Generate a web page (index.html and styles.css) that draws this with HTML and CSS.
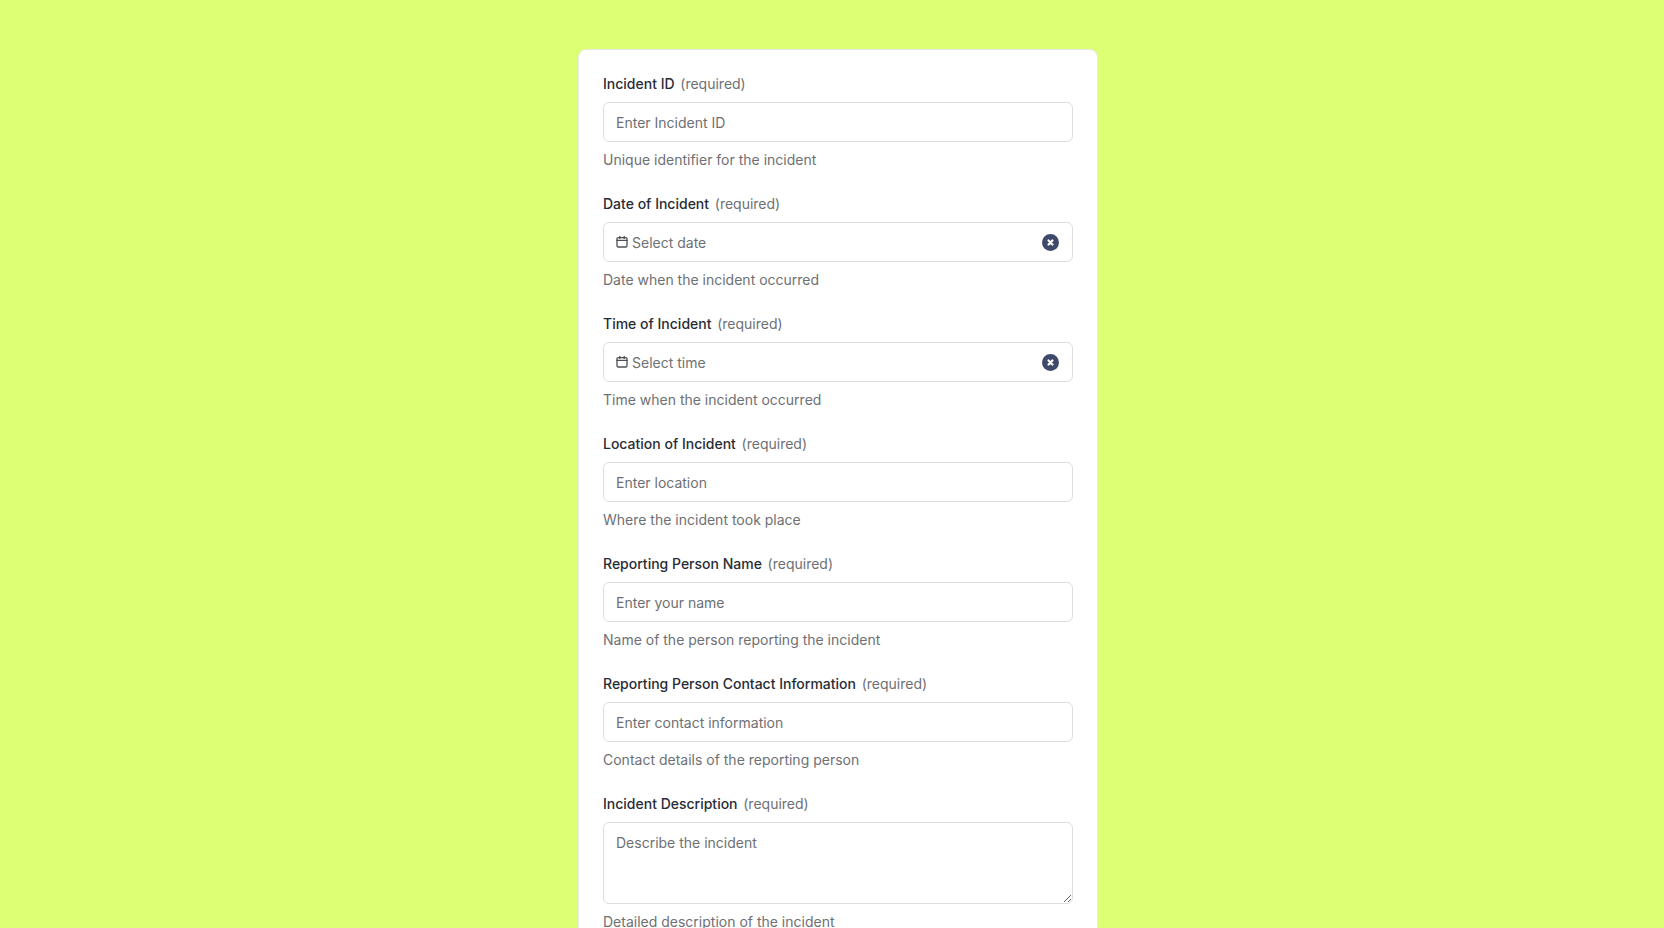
FILE: index.html
```html
<!DOCTYPE html>
<html lang="en">
<head>
  <meta charset="UTF-8">
  <meta name="viewport" content="width=device-width, initial-scale=1.0">
  <title>Incident Report</title>
  <link rel="stylesheet" href="styles.css">
</head>
<body>
  <form class="card">
    <div class="field">
      <label class="label">Incident ID <span class="req">(required)</span></label>
      <input class="input" type="text" placeholder="Enter Incident ID">
      <p class="hint">Unique identifier for the incident</p>
    </div>
    <div class="field">
      <label class="label">Date of Incident <span class="req">(required)</span></label>
      <div class="input picker">
        <svg class="cal" viewBox="0 0 14 14" fill="none" stroke="currentColor" stroke-width="1.3" stroke-linecap="round">
          <rect x="2" y="2.6" width="10" height="9.4" rx="1.2"/>
          <path d="M2 5.4h10M4.8 1.4v2M9.2 1.4v2"/>
        </svg>
        <span class="value">Select date</span>
        <button class="clear" type="button">
          <svg viewBox="0 0 10 10" fill="none" stroke="currentColor" stroke-width="2" stroke-linecap="round"><path d="M3.2 3.2l3.6 3.6M6.8 3.2l-3.6 3.6"/></svg>
        </button>
      </div>
      <p class="hint">Date when the incident occurred</p>
    </div>
    <div class="field">
      <label class="label">Time of Incident <span class="req">(required)</span></label>
      <div class="input picker">
        <svg class="cal" viewBox="0 0 14 14" fill="none" stroke="currentColor" stroke-width="1.3" stroke-linecap="round">
          <rect x="2" y="2.6" width="10" height="9.4" rx="1.2"/>
          <path d="M2 5.4h10M4.8 1.4v2M9.2 1.4v2"/>
        </svg>
        <span class="value">Select time</span>
        <button class="clear" type="button">
          <svg viewBox="0 0 10 10" fill="none" stroke="currentColor" stroke-width="2" stroke-linecap="round"><path d="M3.2 3.2l3.6 3.6M6.8 3.2l-3.6 3.6"/></svg>
        </button>
      </div>
      <p class="hint">Time when the incident occurred</p>
    </div>
    <div class="field">
      <label class="label">Location of Incident <span class="req">(required)</span></label>
      <input class="input" type="text" placeholder="Enter location">
      <p class="hint">Where the incident took place</p>
    </div>
    <div class="field">
      <label class="label">Reporting Person Name <span class="req">(required)</span></label>
      <input class="input" type="text" placeholder="Enter your name">
      <p class="hint">Name of the person reporting the incident</p>
    </div>
    <div class="field">
      <label class="label">Reporting Person Contact Information <span class="req">(required)</span></label>
      <input class="input" type="text" placeholder="Enter contact information">
      <p class="hint">Contact details of the reporting person</p>
    </div>
    <div class="field">
      <label class="label">Incident Description <span class="req">(required)</span></label>
      <textarea class="input area" placeholder="Describe the incident"></textarea>
      <p class="hint">Detailed description of the incident</p>
    </div>
  </form>
</body>
</html>
```

FILE: styles.css
```css
html {
  overflow: hidden;
}
body {
  margin: 0;
  height: 928px;
  overflow: hidden;
  background-color: #dcff73;
  font-family: Inter, "Liberation Sans", sans-serif;
  font-size: 14px;
  line-height: 20px;
  color: #282c35;
}
.card {
  box-sizing: border-box;
  width: 520px;
  margin: 49px 0 40px 578px;
  padding: 24px;
  background-color: #fff;
  border: 1px solid #e8e8e8;
  border-radius: 8px;
  display: flex;
  flex-direction: column;
  gap: 24px;
}
.field {
  display: flex;
  flex-direction: column;
  gap: 8px;
}
.label {
  font-weight: 500;
}
.req {
  margin-left: 2px;
  font-weight: 400;
  color: #6e7074;
}
.input {
  box-sizing: border-box;
  width: 100%;
  height: 40px;
  padding: 8px 12px;
  background-color: #fff;
  border: 1px solid #dedede;
  border-radius: 6px;
  font-family: inherit;
  font-size: 14px;
  line-height: 20px;
  color: #6e7074;
}
.input::placeholder {
  color: #6e7074;
  opacity: 1;
}
.picker {
  display: flex;
  align-items: center;
  gap: 3px;
}
.cal {
  width: 14px;
  height: 14px;
  flex: none;
  margin-left: -1px;
  margin-top: -1px;
  color: #4d5056;
}
.value {
  margin-top: 2px;
}
.clear {
  margin-left: auto;
  margin-right: 1px;
  width: 17px;
  height: 17px;
  padding: 0;
  border: none;
  border-radius: 50%;
  background-color: #3f4a6b;
  color: #fff;
  display: flex;
  align-items: center;
  justify-content: center;
}
.clear svg {
  width: 11px;
  height: 11px;
}
.area {
  display: block;
  height: 82px;
  padding-top: 10px;
  resize: vertical;
}
.hint {
  margin: 0;
  color: #6e7074;
}
```
